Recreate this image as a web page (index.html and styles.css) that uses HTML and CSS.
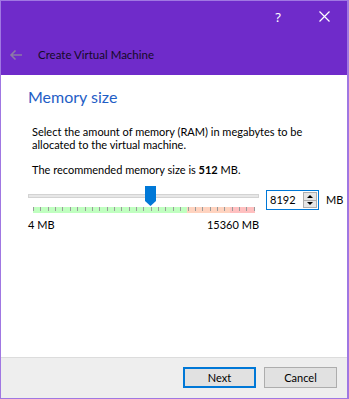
FILE: index.html
```html
<!DOCTYPE html>
<html>
<head>
<meta charset="utf-8">
<link rel="stylesheet" href="styles.css">
</head>
<body>
<div class="window">
  <div class="header">
    <div class="caption">
      <span class="cap-btn help">?</span>
      <span class="cap-btn close">
        <svg width="11" height="11" viewBox="0 0 11 11"><path d="M0.5 0.5 L10.5 10.5 M10.5 0.5 L0.5 10.5" stroke="#fff" stroke-width="1.2"/></svg>
      </span>
    </div>
    <div class="title-row">
      <svg class="back" width="14" height="12" viewBox="0 0 14 12"><path d="M13 6 H2 M6.5 1.5 L2 6 L6.5 10.5" stroke="#8c7aa6" stroke-width="1.6" fill="none"/></svg>
      <span class="title">Create Virtual Machine</span>
    </div>
  </div>
  <div class="content">
    <h1 class="heading">Memory size</h1>
    <p class="desc">Select the amount of memory (RAM) in megabytes to be allocated to the virtual machine.</p>
    <p class="desc rec">The recommended memory size is <b>512</b> MB.</p>
    <div class="slider-row">
      <div class="slider-col">
        <div class="slider">
          <div class="track"></div>
          <svg class="thumb" style="left:117px" width="11" height="20" viewBox="0 0 11 20"><path d="M0 0 H11 V15 L5.5 20 L0 15 Z" fill="#0078d7"/></svg>
        </div>
        <div class="ticks">
          <i></i><i></i><i></i><i></i><i></i><i></i><i></i><i></i><i></i><i></i>
          <i></i><i></i><i></i><i></i><i></i><i></i><i></i><i></i><i></i><i></i>
          <i></i><i></i><i></i><i></i><i></i><i></i><i></i><i></i><i></i><i></i>
          <i></i>
        </div>
        <div class="range">
          <span>4 MB</span>
          <span>15360 MB</span>
        </div>
      </div>
      <div class="spin">
        <span class="spin-val">8192</span>
        <span class="spin-btns">
          <span class="arr up"></span>
          <span class="arr down"></span>
        </span>
      </div>
      <span class="unit">MB</span>
    </div>
  </div>
  <div class="footer">
    <button class="btn primary">Next</button>
    <button class="btn">Cancel</button>
  </div>
</div>
</body>
</html>
```
FILE: styles.css
```css
* { box-sizing: border-box; }
html, body { margin: 0; padding: 0; }
body { font-family: Lato, "Noto Sans", sans-serif; font-size: 11px; color: #000; background: #fff; }
.window {
  width: 349px; height: 399px;
  border: 1px solid #a077e2;
  border-right-width: 2px;
  display: flex; flex-direction: column;
  background: #fff;
}
.header { height: 74px; background: #6f2bca; display: flex; flex-direction: column; }
.caption { height: 30px; display: flex; justify-content: flex-end; align-items: center; }
.cap-btn { width: 46px; height: 30px; display: flex; align-items: center; justify-content: center; color: #fff; }
.help { font-family: "Noto Sans", sans-serif; font-size: 13px; padding-top: 1px; }
.close svg { display: block; }
.title-row { flex: 1; display: flex; align-items: center; padding-left: 8px; padding-top: 12px; padding-bottom: 9px; }
.back { display: block; margin-right: 15px; }
.title { color: #140a28; font-size: 11.5px; }
.content { flex: 1; padding: 10px 0 0 26px; }
.heading { margin: 0 0 16px 1px; font-weight: 400; font-size: 16px; color: #1f5ec6; line-height: 24px; }
.desc { margin: 0 0 0 5px; line-height: 13px; width: 280px; }
.rec { margin-top: 12px; }
.slider-row { display: flex; align-items: flex-start; margin-top: 10px; }
.slider-col { width: 231px; margin-left: 1px; display: flex; flex-direction: column; }
.slider { position: relative; height: 20px; }
.track { position: absolute; left: 0; right: 0; top: 8px; height: 4px; background: #e7e7e7; border: 1px solid #d3d3d3; }
.thumb { position: absolute; top: 0; display: block; }
.ticks {
  margin: 1px 4px 0 5px; height: 6px;
  display: flex; justify-content: space-between;
  background: linear-gradient(to right, #c0ffc0 0, #c0ffc0 154px, #ffd3bf 154px, #ffd3bf 197px, #ffc0c0 197px);
}
.ticks i { display: block; width: 1px; height: 4px; background: #9a9a9a; }
.range { display: flex; justify-content: space-between; margin-top: 5px; line-height: 14px; }
.spin {
  margin-left: 7px; margin-top: 4px;
  width: 53px; height: 20px; border: 1px solid #0078d7;
  display: flex; align-items: center; justify-content: space-between; padding-left: 3px; padding-right: 1px;
}
.spin-val { line-height: 16px; }
.spin-btns { width: 14px; height: 16px; border: 1px solid #adadad; background: #e5e5e5; display: flex; flex-direction: column; }
.arr { flex: 1; display: flex; align-items: center; justify-content: center; }
.arr.up { border-bottom: 1px solid #adadad; }
.arr.up::before { content: ""; border-left: 3px solid transparent; border-right: 3px solid transparent; border-bottom: 3px solid #000; }
.arr.down::before { content: ""; border-left: 3px solid transparent; border-right: 3px solid transparent; border-top: 3px solid #000; }
.unit { margin-left: 7px; margin-top: 7px; line-height: 14px; }
.footer { height: 41px; background: #eeeeee; border-top: 1px solid #dcdcdc; display: flex; justify-content: flex-end; align-items: flex-start; padding: 9px 10px 0 0; gap: 8px; }
.btn { width: 73px; height: 21px; font-family: inherit; font-size: 11px; background: #e1e1e1; border: 1px solid #adadad; padding: 0; color: #000; }
.btn.primary { border: 2px solid #0078d7; }
```
